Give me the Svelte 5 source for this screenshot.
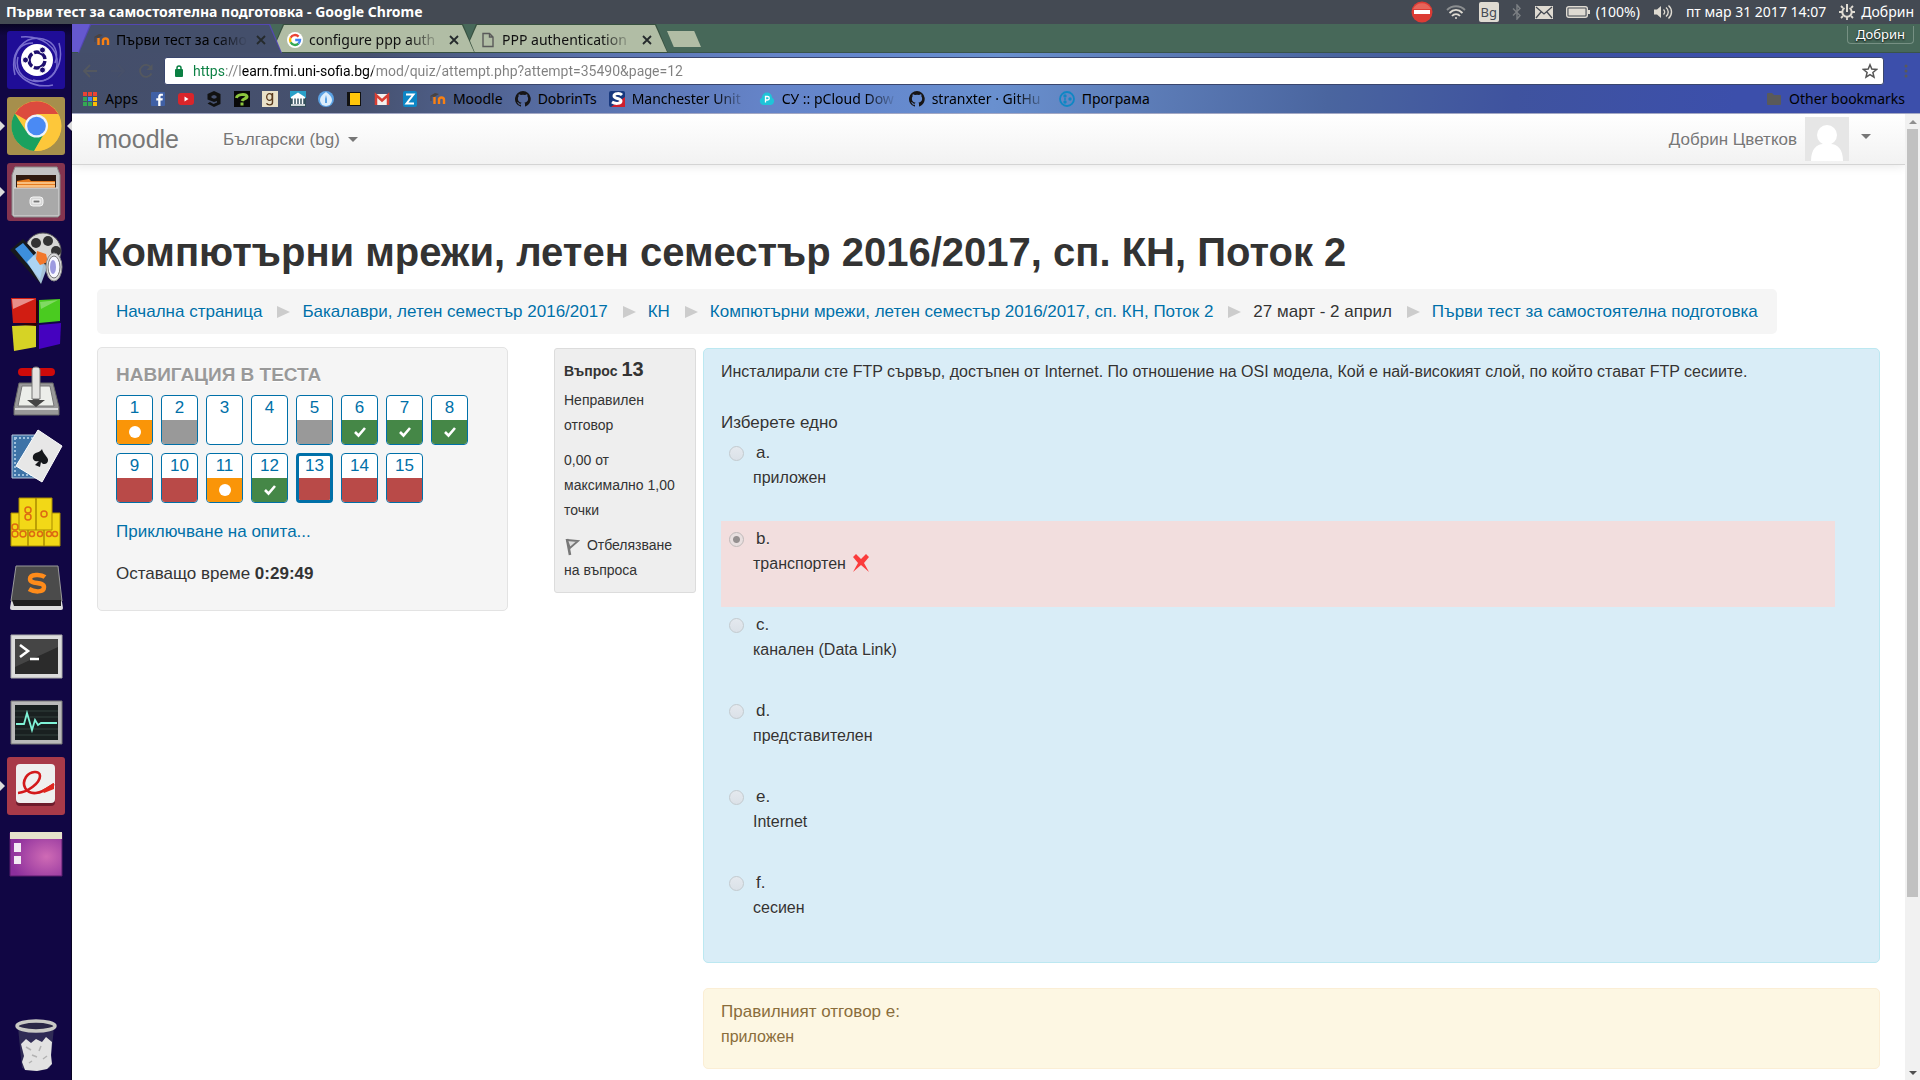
<script>
  const indicators = { date: 'пт мар 31 2017 14:07', user: 'Добрин' };

  const tabs = [
    { title: 'Първи тест за само', icon: 'moodle', active: true },
    { title: 'configure ppp auth', icon: 'google', active: false },
    { title: 'PPP authentication', icon: 'page', active: false }
  ];

  const bookmarks = [
    { icon: 'apps', label: 'Apps' },
    { icon: 'facebook', name: 'Facebook' },
    { icon: 'youtube', name: 'YouTube' },
    { icon: 'nine', name: '9GAG' },
    { icon: 'question', name: 'Question' },
    { icon: 'goodreads', name: 'Goodreads' },
    { icon: 'museum', name: 'Museum' },
    { icon: 'drop', name: 'Drop' },
    { icon: 'yellow', name: 'National Geographic' },
    { icon: 'gmail', name: 'Gmail' },
    { icon: 'zed', name: 'Z' },
    { icon: 'moodle', label: 'Moodle' },
    { icon: 'github', label: 'DobrinTs' },
    { icon: 'sport', label: 'Manchester Unit', fade: true },
    { icon: 'cloud', label: 'СУ :: pCloud Dow', fade: true },
    { icon: 'github', label: 'stranxter · GitHu', fade: true },
    { icon: 'program', label: 'Програма' }
  ];

  const launchers = [
    { icon: 'dash', name: 'Dash', tile: 'blue' },
    { icon: 'chrome', name: 'Google Chrome', tile: 'gold', running: true, focused: true },
    { icon: 'files', name: 'Files', tile: 'wine', running: true },
    { icon: 'movie', name: 'Movie player' },
    { icon: 'cubes', name: 'Cubes' },
    { icon: 'lever', name: 'Transmission' },
    { icon: 'cards', name: 'Solitaire' },
    { icon: 'mahjong', name: 'Mahjongg' },
    { icon: 'sublime', name: 'Sublime Text' },
    { icon: 'terminal', name: 'Terminal' },
    { icon: 'monitor', name: 'System Monitor' },
    { icon: 'document', name: 'Document Viewer', tile: 'red', running: true },
    { icon: 'desktop', name: 'Show Desktop' }
  ];

  const crumbs = [
    { text: 'Начална страница', link: true },
    { text: 'Бакалаври, летен семестър 2016/2017', link: true },
    { text: 'КН', link: true },
    { text: 'Компютърни мрежи, летен семестър 2016/2017, сп. КН, Поток 2', link: true },
    { text: '27 март - 2 април', link: false },
    { text: 'Първи тест за самостоятелна подготовка', link: true }
  ];

  const states = ['partial', 'saved', 'empty', 'empty', 'saved', 'right', 'right', 'right',
    'wrong', 'wrong', 'partial', 'right', 'wrong', 'wrong', 'wrong'];
  const current = 13;

  const answers = [
    { letter: 'a.', text: 'приложен' },
    { letter: 'b.', text: 'транспортен', chosen: true },
    { letter: 'c.', text: 'канален (Data Link)' },
    { letter: 'd.', text: 'представителен' },
    { letter: 'e.', text: 'Internet' },
    { letter: 'f.', text: 'сесиен' }
  ];
</script>

{#snippet favicon(kind)}
  <svg class="favicon" viewBox="0 0 16 16" width="16" height="16" aria-hidden="true">
    {#if kind === 'moodle'}
      <path d="M4.500 6v7M9 13V8.500a2 2 0 0 0-.5-1.500M9 13V9a2.300 2.300 0 0 1 5 0v4" fill="none" stroke="#f98012" stroke-width="2.400" />
      <path d="M0 5l5-3 4 1-5 3z" fill="#4a4340" />
      <path d="M1 5v5" stroke="#4a4340" stroke-width="1" />
    {:else if kind === 'google'}
      <circle cx="8" cy="8" r="8" fill="#fff" />
      <g fill="none" stroke-width="2.400">
        <path d="M11.600 4.600A5 5 0 0 0 3.600 5.700" stroke="#ea4335" />
        <path d="M3.600 5.700a5 5 0 0 0 0 4.600" stroke="#fbbc05" />
        <path d="M3.600 10.300a5 5 0 0 0 7.800 1.300" stroke="#34a853" />
        <path d="M11.400 11.600A5 5 0 0 0 13 8H8.200" stroke="#4285f4" />
      </g>
    {:else if kind === 'page'}
      <path d="M3 1.500h6.500L13 5v9.500H3z M9.500 1.500V5H13" fill="none" stroke="#5a5a5a" stroke-width="1.400" />
    {:else if kind === 'apps'}
      <g>
        <path d="M1 1h4v4H1zM6 1h4v4H6zM11 1h4v4h-4z" fill="#ea4335" />
        <path d="M1 6h4v4H1z" fill="#34a853" /><path d="M6 6h4v4H6z" fill="#4285f4" />
        <path d="M11 6h4v4h-4z" fill="#fbbc05" />
        <path d="M1 11h4v4H1zM6 11h4v4H6z" fill="#34a853" /><path d="M11 11h4v4h-4z" fill="#fbbc05" />
        <path d="M5.500 1v14M10.500 1v14M1 5.500h14M1 10.500h14" stroke="#434e6b" />
      </g>
    {:else if kind === 'facebook'}
      <rect x="1" y="1" width="14" height="14" rx="1" fill="#4060a5" />
      <path d="M10.500 15V9.500h2l.3-2.200h-2.300V6c0-.8.300-1.200 1.200-1.200h1.200V2.800C11 2.500 8.200 2.600 8.200 5.500v1.800H6.300v2.200h1.900V15z" fill="#fff" />
    {:else if kind === 'youtube'}
      <rect y="2" width="16" height="12" rx="3" fill="#d9252a" /><path d="M6.500 5.500v5l4-2.500z" fill="#fff" />
    {:else if kind === 'nine'}
      <path d="M8 0L1.500 3v5.500L8 11l3-1v1.500L7.500 13 4 11l-2.500 1.500L8 16l6.500-3V3zM8 4l2.500 1v2L8 7.800 5.500 6.700V5z" fill="#111" fill-rule="evenodd" />
    {:else if kind === 'question'}
      <rect width="16" height="16" fill="#080808" />
      <path d="M2.500 7C3 3 12 2.500 13 5.500c.5 2-4 2-5 4.500" fill="none" stroke="#8cc63e" stroke-width="3" />
      <rect x="6.500" y="11.500" width="3" height="3" fill="#8cc63e" />
    {:else if kind === 'goodreads'}
      <rect width="16" height="16" fill="#e9e1c9" />
      <ellipse cx="7.500" cy="6" rx="2.800" ry="3.400" fill="none" stroke="#5a3a1c" stroke-width="1.300" />
      <path d="M10.500 2v9.500c0 3-5 3-6 .8" fill="none" stroke="#5a3a1c" stroke-width="1.400" />
    {:else if kind === 'museum'}
      <rect width="16" height="16" fill="#35505c" /><path d="M0 0h16v7H0z" fill="#2aa0c8" /><path d="M1 6L8 1.500 15 6v1.500H1z" fill="#fff" />
      <path d="M3.500 7v6M6.500 7v6M9.500 7v6M12.500 7v6M1 14h14" stroke="#fff" stroke-width="1.500" />
    {:else if kind === 'drop'}
      <circle cx="8" cy="8" r="8" fill="#5ba2e4" /><path d="M8 1c4 3 6 5 6 8a6 6 0 0 1-12 0c0-3 2-5 6-8z" fill="#dceefc" />
      <path d="M8 4q1.500 4 1 8H7Q6.500 8 8 4z" fill="#5ba2e4" />
    {:else if kind === 'yellow'}
      <path d="M1 1h14v14H1z" fill="#111" /><path d="M4 2h10v12H4z" fill="#ffc60a" />
    {:else if kind === 'gmail'}
      <path d="M1 3h14v11H1z" fill="#f3f1ee" /><path d="M2 14V4l6 5.500L14 4v10" fill="none" stroke="#d93f34" stroke-width="2.500" />
    {:else if kind === 'zed'}
      <rect x="1" width="14" height="16" rx="2" fill="#0c86c6" /><path d="M4 3.500h7.500L4.500 12.500H12" fill="none" stroke="#fff" stroke-width="2" />
    {:else if kind === 'github'}
      <path d="M8 0a8 8 0 0 0-2.500 15.600c.4.100.5-.2.500-.4v-1.500c-2.200.5-2.700-1-2.700-1-.4-.9-.9-1.200-.9-1.200-.7-.5.100-.5.100-.5.800.1 1.200.8 1.200.8.700 1.300 1.900.9 2.300.7.100-.5.300-.9.500-1.100-1.800-.2-3.600-.9-3.600-4 0-.9.300-1.600.8-2.100-.1-.2-.4-1 .1-2.100 0 0 .7-.2 2.200.8a7.500 7.500 0 0 1 4 0c1.500-1 2.200-.8 2.200-.8.400 1.100.200 1.900.1 2.100.5.600.8 1.300.8 2.100 0 3.100-1.900 3.800-3.700 4 .3.300.6.800.6 1.500v2.200c0 .2.100.5.500.4A8 8 0 0 0 8 0z" fill="#171515" />
    {:else if kind === 'sport'}
      <rect width="16" height="16" rx="2" fill="#17387e" /><path d="M2 16L16 6v10z" fill="#d01f2c" />
      <path d="M13 4C11 2 5 2 5 5s7 2 7 5-6 3-9 1" fill="none" stroke="#fff" stroke-width="3" />
    {:else if kind === 'cloud'}
      <path d="M4 14a4 4 0 0 1-1-7.500 5 5 0 0 1 10 0A4 4 0 0 1 12 14z" fill="#1fc4d8" />
      <path d="M6.500 11.500V5.500h2a1.700 1.700 0 0 1 0 3.500h-2" fill="none" stroke="#fff" stroke-width="1.300" />
    {:else if kind === 'program'}
      <circle cx="8" cy="8" r="7" fill="none" stroke="#0f87c4" stroke-width="1.800" />
      <g fill="#0f87c4"><circle cx="6" cy="5" r="1.700" /><circle cx="11" cy="8" r="1.700" /><circle cx="6" cy="11" r="1.700" /><circle cx="6" cy="8" r="1" /></g>
    {/if}
  </svg>
{/snippet}

{#snippet appIcon(kind)}
  <svg viewBox="0 0 58 58" width="58" height="58" aria-hidden="true">
    {#if kind === 'dash'}
      <g fill="none" stroke="#8f86dc" stroke-width="1.500" opacity=".8">
        <path d="M8 44C2 20 18 4 36 8c12 3 16 14 12 24" /><path d="M14 6c20-2 38 10 36 28-2 14-14 18-24 15" />
        <path d="M52 12c6 22-8 42-26 38C14 47 8 38 11 26" /><path d="M46 54C26 58 6 46 8 28c2-12 10-16 18-16" />
      </g>
      <circle cx="30" cy="29" r="16" fill="#fff" />
      <circle cx="30" cy="29" r="8" fill="none" stroke="#1d0f6e" stroke-width="3.400" stroke-dasharray="14.700 2" stroke-dashoffset="-1" />
      <g fill="#1d0f6e" stroke="#fff" stroke-width="1"><circle cx="18.500" cy="29" r="3" /><circle cx="35.500" cy="19" r="3" /><circle cx="35.500" cy="39" r="3" /></g>
    {:else if kind === 'chrome'}
      <circle cx="29.500" cy="29" r="25" fill="#fdc73a" />
      <path d="M29.500 29L7.800 16.500A25 25 0 0 1 51.200 17H29.500z" fill="#dc4b3e" />
      <path d="M7.800 16.500A25 25 0 0 0 27 53.900L38 35 19 34z" fill="#1aa15f" />
      <path d="M29.500 18h22a25 25 0 0 1-24 36l11-19z" fill="#fdc73a" />
      <circle cx="29.500" cy="29" r="11.500" fill="#eef3fb" /><circle cx="29.500" cy="29" r="9.300" fill="#4a8af4" />
    {:else if kind === 'files'}
      <path d="M8 4h42l3 8v40l-2 2H7l-2-2V12z" fill="#c3c3c3" stroke="#8a8a8a" /><path d="M9 12h40v14H9z" fill="#2f1a10" />
      <path d="M10 18l12-2 2 2h24v7H10z" fill="#e57b1f" /><path d="M10 20h38M10 23h38" stroke="#ffd6a0" stroke-width="1.500" />
      <path d="M7 25h44v27H7z" fill="#a9a9a9" /><path d="M7 25h44" stroke="#e0e0e0" />
      <rect x="23" y="34" width="13" height="9" rx="3" fill="#d7d7d7" stroke="#f4f4f4" /><rect x="26" y="37" width="7" height="3" fill="#777" stroke="#fff" />
    {:else if kind === 'movie'}
      <circle cx="36" cy="22" r="18" fill="#d7d7d5" stroke="#555" />
      <g fill="#333"><circle cx="29" cy="14" r="5" /><circle cx="41" cy="12" r="5" /><circle cx="49" cy="22" r="5" /><circle cx="25" cy="26" r="4" /></g>
      <path d="M3 21l13-11 23 24-5 21-7-7z" fill="#17191d" /><path d="M8 20l8-6 20 23-3 13z" fill="#3d8fdd" /><path d="M20 33l10-10 10 16-6 16z" fill="#bfe0f7" opacity=".85" />
      <path d="M30 22l9 3 2 8-8 3-4-6z" fill="#f2772a" />
      <ellipse cx="47" cy="38" rx="8" ry="14" fill="#dcdcdc" stroke="#888" /><ellipse cx="47" cy="38" rx="6" ry="11" fill="#f7f7ff" stroke="#777" /><ellipse cx="46" cy="38" rx="3" ry="7" fill="#9d9ae0" />
    {:else if kind === 'cubes'}
      <path d="M4 3h25v25H6z" fill="#d11d12" /><path d="M32 5l21-1v22l-21 2z" fill="#4acb20" /><path d="M5 31l24-1v22L7 56z" fill="#d6d325" /><path d="M32 30l22-2-1 21-21 5z" fill="#4502bf" />
      <path d="M5 4h23L6 14z" fill="#fff" opacity=".5" /><path d="M33 7l18-2-17 9z" fill="#fff" opacity=".3" /><path d="M29 5v23l2-2V6zM7 29l24-1-2 3z" fill="#300" />
    {:else if kind === 'lever'}
      <path d="M12 22h34l6 24v8H7v-8z" fill="#999" stroke="#666" /><path d="M15 25h28l4 20H11z" fill="#eceeea" stroke="#777" />
      <path d="M20 39h6v-4h6v4h6l-9 7z" fill="#444" /><rect x="11" y="7" width="37" height="8" rx="4" fill="#cf0a0a" />
      <path d="M25 9c0-4 8-4 8 0v29h-8z" fill="#e4e4e2" stroke="#777" /><path d="M8 48h43" stroke="#ddd" stroke-width="2" />
    {:else if kind === 'cards'}
      <path d="M5 8h26v43H5z" fill="#3e73a7" stroke="#b7c8da" /><path d="M8 11h20v37H8z" fill="none" stroke="#9fc0dd" stroke-dasharray="2 2" stroke-width="2" />
      <path d="M31 3l24 16-20 36L9 39z" fill="#e7e7e7" stroke="#fff" /><path d="M35 22c1 6 9 9 5 14-2 2-5 1-6-1l-1 5-5-2 4-4c-4 1-7-1-6-5 1-4 7-3 9-7z" fill="#15171b" />
    {:else if kind === 'mahjong'}
      <g fill="#f2d817" stroke="#a98b00"><path d="M4 20h17v33H4zM21 20h16v33H21zM37 20h16v33H37z" /><path d="M12 5h17v32H12zM29 5h16v32H29z" /></g>
      <g fill="none" stroke="#dc6a12" stroke-width="1.500"><circle cx="21" cy="17" r="3" /><circle cx="21" cy="24" r="3" /><circle cx="37" cy="21" r="3" /><circle cx="8" cy="34" r="3" /><circle cx="8" cy="41" r="3" /><circle cx="16" cy="41" r="3" /><circle cx="25" cy="41" r="2.500" /><circle cx="33" cy="41" r="2.500" /><circle cx="42" cy="41" r="2.500" /><circle cx="48" cy="41" r="2.500" /></g>
    {:else if kind === 'sublime'}
      <path d="M5 37l-2 12q0 2 2 2h49q2 0 2-2l-2-12z" fill="#ddd" /><path d="M9 7h42l4 35H4z" fill="#4b4b4b" stroke="#999" /><path d="M5 41h49v6H7z" fill="#1e1e1e" />
      <path d="M38 18c-4-3-15-3-15 2 0 6 14 2 14 8s-10 5-15 2" fill="none" stroke="#ff8b1a" stroke-width="4.500" />
    {:else if kind === 'terminal'}
      <path d="M4 10h51v43H4z" fill="#dcdcdc" stroke="#aaa" /><path d="M8 14h43v35H8z" fill="#2b2b2b" /><path d="M8 14h43v8L8 42z" fill="#454545" />
      <path d="M13 20l8 6-8 6M23 34h9" fill="none" stroke="#fff" stroke-width="2.600" />
    {:else if kind === 'monitor'}
      <path d="M4 10h51v43H4z" fill="#b9b9b9" stroke="#777" /><path d="M8 14h43v35H8z" fill="#192020" /><path d="M8 20h43M8 26h43M8 38h43M8 44h43" stroke="#32403c" />
      <path d="M9 33h8l3-11 5 17 3-10 3 5 3-2h16" fill="none" stroke="#7ff3d7" stroke-width="1.800" />
    {:else if kind === 'document'}
      <rect x="9" y="9" width="39" height="40" rx="4" fill="#6d1c2c" /><rect x="9" y="7" width="39" height="39" rx="4" fill="#efefef" />
      <path d="M11 36c10-1 22-10 22-17 0-6-10-5-14 1-5 8 0 17 10 16 8-1 12-5 18-9" fill="none" stroke="#d3191b" stroke-width="2.600" /><path d="M35 33l12-7v6l-10 4z" fill="#e0271f" />
    {:else if kind === 'desktop'}
      <defs><radialGradient id="glow" cx=".7" cy=".55" r=".7"><stop stop-color="#cf6bb5" /><stop offset="1" stop-color="#8c2f9c" /></radialGradient></defs>
      <path d="M3 10h52v43H3z" fill="url(#glow)" stroke="#5b1c6d" /><path d="M3 9h52v7H3z" fill="#e6e3cb" />
      <path d="M7 20h7v9H7zM7 33h7v8H7z" fill="#f2eaf4" />
    {:else if kind === 'trash'}
      <path d="M11 11l4 41q14 6 28 0l4-41z" fill="#37345a" opacity=".8" />
      <path d="M14 28l5-5 5 4 5-4 6 3 4-5 6 5-1 13 1 9-5 5-10 2-12-1-3-8 2-6z" fill="#e2e2e2" /><path d="M19 31l5 3M25 39l5 2M34 30l-2 5M36 43l4-3M22 47l3-2" fill="none" stroke="#b2b2b2" stroke-width="1.500" />
      <ellipse cx="29" cy="10" rx="19" ry="5" fill="#2a2746" stroke="#c9c9c5" stroke-width="3.500" />
    {/if}
  </svg>
{/snippet}

<div class="desktop">
  <header class="panel">
    <span class="window-title">Първи тест за самостоятелна подготовка - Google Chrome</span>
    <div class="tray">
      <svg viewBox="0 0 22 22" width="22" height="22" aria-hidden="true"><circle cx="11" cy="11" r="10.500" fill="#dc3b34" /><path d="M2 8a10 10 0 0 1 18 0z" fill="#ef8f80" opacity=".5" /><path d="M3 11h16" stroke="#fff" stroke-width="4" /></svg>
      <svg viewBox="0 0 20 16" width="20" height="16" aria-hidden="true" fill="none" stroke-width="1.800"><path d="M1 6c5-5 13-5 18 0" stroke="#8b8e90" /><path d="M3.500 9c4-4 9-4 13 0M6 12c2-2.500 6-2.500 8 0" stroke="#dfdbd2" /><circle cx="10" cy="14" r="1" fill="#dfdbd2" stroke="none" /></svg>
      <span class="layout">Bg</span>
      <svg viewBox="0 0 10 16" width="10" height="16" aria-hidden="true" fill="none" stroke="#7c8084" stroke-width="1.400"><path d="M1 4.500l7 7L5 15V1l3 3.500-7 7" /></svg>
      <svg viewBox="0 0 18 13" width="18" height="13" aria-hidden="true"><path d="M0 0h18v13H0z" fill="#dfdbd2" /><path d="M1 1l8 7 8-7M1 12l5-6M17 12l-5-6" fill="none" stroke="#454a52" stroke-width="1.300" /></svg>
      <span class="battery">
        <svg viewBox="0 0 24 12" width="24" height="12" aria-hidden="true"><rect x=".7" y=".7" width="20.600" height="10.600" rx="2" fill="none" stroke="#dfdbd2" stroke-width="1.400" /><path d="M2.500 2.500h17v7h-17zM22 4h2v4h-2z" fill="#dfdbd2" /></svg>
        (100%)
      </span>
      <svg viewBox="0 0 20 16" width="20" height="16" aria-hidden="true"><path d="M1 5.500h3L8 2v12l-4-3.500H1z" fill="#dfdbd2" /><path d="M10.500 5.500c1.500 1.500 1.500 3.500 0 5M13 3.500c3 2.500 3 6.500 0 9M15.500 1.500c4 3.500 4 9.500 0 13" fill="none" stroke="#dfdbd2" stroke-width="1.400" /></svg>
      <time>{indicators.date}</time>
      <span class="session">
        <svg viewBox="0 0 16 16" width="16" height="16" aria-hidden="true" fill="none" stroke="#dfdbd2"><path d="M5.500 4a4.700 4.700 0 1 0 5 0" stroke-width="2" /><path d="M8 0v8" stroke-width="2" /><path d="M2 2l2 2M14 2l-2 2M0 8h3M13 8h3M2 14l2-2M14 14l-2-2M8 13v3" stroke-width="1.800" /></svg>
        {indicators.user}
      </span>
    </div>
  </header>

  <div class="workspace">
    <nav class="launcher" aria-label="Launcher">
      {#each launchers as app}
        <button class="app {app.tile ?? ''}" class:running={app.running} class:focused={app.focused} aria-label={app.name}>
          {@render appIcon(app.icon)}
        </button>
      {/each}
      <button class="app trash" aria-label="Trash">{@render appIcon('trash')}</button>
    </nav>

    <section class="browser">
      <div class="tabstrip">
        {#each tabs as tab, i}
          <div class="tab" class:active={tab.active} style:z-index={3 - i}>
            {@render favicon(tab.icon)}
            <span class="tab-title">{tab.title}</span>
            <button class="tab-close" aria-label="Close tab">
              <svg viewBox="0 0 10 10" width="10" height="10" aria-hidden="true"><path d="M1 1l8 8M9 1L1 9" stroke="currentColor" stroke-width="1.800" /></svg>
            </button>
          </div>
        {/each}
        <button class="new-tab" aria-label="New tab"></button>
        <button class="profile">Добрин</button>
      </div>

      <div class="chrome-bars">
        <div class="toolbar">
          <button class="tool" aria-label="Back"><svg viewBox="0 0 16 16" width="16" height="16" aria-hidden="true"><path d="M15 8H2M8 2L2 8l6 6" fill="none" stroke="currentColor" stroke-width="1.800" /></svg></button>
          <button class="tool forward" aria-label="Forward"><svg viewBox="0 0 16 16" width="16" height="16" aria-hidden="true"><path d="M1 8h13M8 2l6 6-6 6" fill="none" stroke="currentColor" stroke-width="1.800" /></svg></button>
          <button class="tool" aria-label="Reload"><svg viewBox="0 0 16 16" width="16" height="16" aria-hidden="true"><path d="M13.500 10.500A6 6 0 1 1 13 4.500" fill="none" stroke="currentColor" stroke-width="1.800" /><path d="M14.500 1v6h-6z" fill="currentColor" /></svg></button>
          <div class="omnibox">
            <svg viewBox="0 0 10 14" width="10" height="14" aria-hidden="true"><rect y="5" x="1" width="8" height="8" rx="1" fill="#0b8043" /><path d="M3 6V4a2 2 0 0 1 4 0v2" fill="none" stroke="#0b8043" stroke-width="1.500" /></svg>
            <input class="url" aria-label="Address" value="https://learn.fmi.uni-sofia.bg/mod/quiz/attempt.php?attempt=35490&page=12" />
            <button class="star" aria-label="Bookmark this page"><svg viewBox="0 0 16 16" width="16" height="16" aria-hidden="true"><path d="M8 1.800l1.800 4.300 4.700.4-3.600 3 1.100 4.600L8 11.700l-4 2.400 1.100-4.600-3.600-3 4.700-.4z" fill="none" stroke="#555" stroke-width="1.500" /></svg></button>
          </div>
          <button class="menu" aria-label="Menu"><svg viewBox="0 0 4 14" width="4" height="14" aria-hidden="true" fill="#5a5a5a"><circle cx="2" cy="2" r="1.500" /><circle cx="2" cy="7" r="1.500" /><circle cx="2" cy="12" r="1.500" /></svg></button>
        </div>
        <nav class="bookmarks" aria-label="Bookmarks">
          {#each bookmarks as mark}
            <a class="bookmark" href="#bookmark" aria-label={mark.label ?? mark.name}>
              {@render favicon(mark.icon)}
              {#if mark.label}<span class:fade={mark.fade}>{mark.label}</span>{/if}
            </a>
          {/each}
          <a class="bookmark other" href="#bookmark">
            <svg viewBox="0 0 16 16" width="16" height="16" aria-hidden="true"><path d="M1 3q0-1 1-1h4l2 2h6q1 0 1 1v8q0 1-1 1H2q-1 0-1-1z" fill="#5a5a5a" /></svg>
            <span>Other bookmarks</span>
          </a>
        </nav>
      </div>

      <div class="viewport">
        <div class="page">
          <header class="navbar">
            <a class="brand" href="#home">moodle</a>
            <button class="nav-menu">Български (bg) <i class="caret"></i></button>
            <button class="nav-menu user">
              Добрин Цветков
              <svg class="avatar" viewBox="0 0 44 44" width="44" height="44" aria-hidden="true"><path d="M0 0h44v44H0z" fill="#e6e6e6" /><circle cx="22" cy="18" r="10" fill="#fff" /><path d="M6 44c0-12 6-17 12-17h8c6 0 12 5 12 17z" fill="#fff" /></svg>
              <i class="caret"></i>
            </button>
          </header>

          <main>
            <h1>Компютърни мрежи, летен семестър 2016/2017, сп. КН, Поток 2</h1>
            <nav class="breadcrumb" aria-label="Breadcrumb">
              {#each crumbs as crumb, i}
                {#if i > 0}<i class="arrow"></i>{/if}
                {#if crumb.link}<a href="#crumb">{crumb.text}</a>{:else}<span>{crumb.text}</span>{/if}
              {/each}
            </nav>

            <div class="columns">
              <aside class="quiz-nav">
                <h2>Навигация в теста</h2>
                <div class="numbers">
                  {#each states as state, i}
                    <a class="number {state}" class:current={i + 1 === current} href="#q{i + 1}">
                      <span class="digit">{i + 1}</span>
                      <span class="mark">
                        {#if state === 'right'}
                          <svg viewBox="0 0 14 12" width="14" height="12" aria-hidden="true"><path d="M2 6l3.500 3.500L12 2" fill="none" stroke="#fff" stroke-width="2.600" /></svg>
                        {:else if state === 'partial'}
                          <svg viewBox="0 0 12 12" width="12" height="12" aria-hidden="true"><circle cx="6" cy="6" r="6" fill="#fff" /></svg>
                        {/if}
                      </span>
                    </a>
                  {/each}
                </div>
                <a class="finish" href="#finish">Приключване на опита...</a>
                <p class="timer">Оставащо време <strong>0:29:49</strong></p>
              </aside>

              <section class="question">
                <div class="info">
                  <h3>Въпрос <span>13</span></h3>
                  <p>Неправилен отговор</p>
                  <p>0,00 от максимално 1,00 точки</p>
                  <p>
                    <svg class="flag" viewBox="0 0 16 20" width="16" height="20" aria-hidden="true"><path d="M3 2l3 16" stroke="#777" stroke-width="2.600" /><path d="M3 3l11 1-8 7z" fill="#ddd" stroke="#777" stroke-width="1.800" /></svg>
                    Отбелязване на въпроса
                  </p>
                </div>
                <div class="content">
                  <div class="formulation">
                    <p class="text">Инсталирали сте FTP сървър, достъпен от Internet. По отношение на OSI модела, Кой е най-високият слой, по който стават FTP сесиите.</p>
                    <fieldset>
                      <legend>Изберете едно</legend>
                      {#each answers as answer, i}
                        <div class="answer" class:incorrect={answer.chosen}>
                          <input type="radio" name="answer" id="answer{i}" checked={answer.chosen} disabled />
                          <label for="answer{i}">
                            <span class="letter">{answer.letter}</span>
                            <span>{answer.text}
                              {#if answer.chosen}
                                <svg class="cross" viewBox="0 0 16 18" width="16" height="18" aria-hidden="true"><path d="M0 3l3-3 5 5 5-5 3 3-5 6 5 9-8-7-8 7 5-9z" fill="#fb3b3b" /></svg>
                              {/if}
                            </span>
                          </label>
                        </div>
                      {/each}
                    </fieldset>
                  </div>
                  <div class="feedback">
                    <p>Правилният отговор е:</p>
                    <p class="text">приложен</p>
                  </div>
                </div>
              </section>
            </div>
          </main>
        </div>
        <div class="scrollbar" aria-hidden="true">
          <i class="up"></i>
          <div class="track"><div class="thumb"></div></div>
          <i class="down"></i>
        </div>
      </div>
    </section>
  </div>
</div>

<style>
  :global(body) { margin: 0; }
  :global(*) { box-sizing: border-box; }
  p, h1, h2, h3 { margin: 0; }
  a { color: #0070a8; text-decoration: none; }
  button { font: inherit; color: inherit; border: 0; padding: 0; background: none; }
  svg { display: block; flex: none; }

  .desktop {
    display: flex; flex-direction: column; height: 100vh; overflow: hidden;
    font: 14px/20px "Noto Sans", "Open Sans", sans-serif; color: #000;
  }
  .panel {
    display: flex; justify-content: space-between; align-items: center; flex: none;
    height: 24px; padding: 0 6px; background: #444a53; color: #fff; white-space: nowrap;
  }
  .window-title { font-weight: 700; }
  .tray { display: flex; align-items: center; gap: 13px; }
  .layout { width: 20px; border-radius: 2px; background: #dfdbd2; color: #444a53; font-size: 13px; text-align: center; }
  .battery, .session { display: flex; align-items: center; gap: 6px; }

  .workspace { display: flex; flex: 1; min-height: 0; }
  .launcher {
    display: flex; flex-direction: column; gap: 8px; flex: none; width: 72px; padding: 7px 7px 6px;
    background: linear-gradient(#080323, #110644 12px); border-right: 1px solid #080323;
  }
  .app { position: relative; width: 58px; height: 58px; border-radius: 3px; flex: none; }
  .blue { background: #1f0d97; }
  .gold { background: #a68f4c; }
  .wine { background: #84344f; }
  .red { background: #a83a49; }
  .trash { margin-top: auto; }
  .running::before, .focused::after {
    content: ""; position: absolute; top: 24px; border: 5px solid transparent;
  }
  .running::before { left: -7px; border-left-color: #dcdcdc; border-right: 0; }
  .focused::after { right: -7px; border-right-color: #dcdcdc; border-left: 0; }

  .browser { display: flex; flex-direction: column; flex: 1; min-width: 0; }
  .tabstrip {
    display: flex; align-items: stretch; flex: none; height: 29px; padding-left: 6px;
    background: linear-gradient(90deg, #6558cf 40px, #476859 40px);
    box-shadow: inset 0 -1px #39544a; isolation: isolate;
  }
  .tab {
    position: relative; display: flex; align-items: center; gap: 6px; width: 204px; margin-right: -11px; padding: 2px 14px 0 16px;
  }
  .tab::before, .tab::after {
    content: ""; position: absolute; inset: 0; z-index: -1; background: #37503f;
    clip-path: polygon(0 100%, 12px 0, calc(100% - 12px) 0, 100% 100%);
  }
  .tab::after { inset: 1px 1px 1px; background: #b1bda5; }
  .tab.active::before { background: #5347b3; }
  .tab.active::after { inset: 1px 1px 0; background: #444f6b; }
  .tab-title {
    flex: 1; overflow: hidden; white-space: nowrap;
    mask-image: linear-gradient(90deg, #000 calc(100% - 32px), transparent);
  }
  .tab:not(.active) { color: #111; }
  .tab-close { color: #252a2c; padding: 2px; }
  .new-tab {
    width: 34px; height: 16px; margin: 7px 0 0 10px; background: #b1bda5;
    clip-path: polygon(0 0, 80% 0, 100% 100%, 20% 100%);
  }
  .profile {
    height: 18px; margin: 2px 6px 0 auto; padding: 0 8px; color: #fff; font-size: 13px; line-height: 17px;
    border: 1px solid #769083; border-top: 0; border-radius: 0 0 4px 4px; text-shadow: 0 1px 2px #000;
  }
  .chrome-bars {
    flex: none; border-bottom: 1px solid #a3a8c4;
    background: linear-gradient(97deg, #444e6a 0%, #46516f 16%, #5a72ad 28%, #6584c9 38%, #6487cd 43%, #6990cf 50%, #5d7db8 58%, #4a659f 68%, #3f539f 78%, #3c4fab 90%);
  }
  .toolbar { display: flex; align-items: center; padding: 4px 8px 1px 10px; height: 32px; }
  .tool { width: 28px; color: #54585f; }
  .tool svg { display: block; }
  .forward { color: #475069; }
  .omnibox {
    display: flex; align-items: center; flex: 1; height: 28px; margin: 0 16px 0 -2px; padding: 0 5px 0 9px;
    background: #fff; border: 1px solid #3a466d; border-radius: 3px;
  }
  .url {
    flex: 1; border: 0; outline: 0; padding: 0; margin-left: 9px; font: 14px/20px Roboto, sans-serif; color: transparent;
    background: linear-gradient(90deg, #0b8043 33px, #808080 33px 48px, #000 48px 180px, #808080 180px);
    background-clip: text; -webkit-background-clip: text;
  }
  .menu { padding: 4px; }
  .bookmarks { display: flex; align-items: center; gap: 12px; height: 28px; padding: 0 15px 0 10px; }
  .bookmark { display: flex; align-items: center; gap: 7px; color: #000; white-space: nowrap; flex: none; }
  .fade {
    width: 115px; overflow: hidden;
    mask-image: linear-gradient(90deg, #000 calc(100% - 32px), transparent);
  }
  .other { margin-left: auto; }

  .viewport { display: flex; flex: 1; min-height: 0; background: #fff; }
  .page {
    flex: 1; min-width: 0; overflow: hidden; color: #333;
    font: 17px/25px "Liberation Sans", Arial, sans-serif;
  }
  .navbar {
    display: flex; align-items: center; height: 51px; padding: 0 34px 0 25px; color: #777;
    background: linear-gradient(#fff, #f2f2f2); border-bottom: 1px solid #d4d4d4; box-shadow: 0 1px 10px rgb(0 0 0 / 10%);
  }
  .brand { margin-right: 44px; color: #777; font-size: 25px; }
  .nav-menu { display: flex; align-items: center; gap: 8px; text-shadow: 0 1px #fff; }
  .user { margin-left: auto; }
  .user .caret { margin: 0 0 5px 4px; }
  .caret { border: 5px solid transparent; border-top-color: #777; border-bottom: 0; }

  main { padding: 62px 25px 0; }
  h1 { font-size: 40px; line-height: 50px; white-space: nowrap; }
  .breadcrumb {
    display: flex; align-items: center; width: fit-content; margin: 12px 0 13px; padding: 10px 19px;
    background: #f5f5f5; border-radius: 5px; white-space: nowrap; text-shadow: 0 1px #fff;
  }
  .arrow { margin: 0 12px 0 15px; border: 6px solid transparent; border-left: 13px solid #ccc; border-right: 0; }

  .columns { display: grid; grid-template-columns: 411px minmax(0, 1fr); gap: 46px; align-items: start; }
  .quiz-nav { padding: 14px 18px 24px; background: #f5f5f5; border: 1px solid #e3e3e3; border-radius: 5px; }
  h2 { color: #999; font-size: 19px; line-height: 25px; text-transform: uppercase; text-shadow: 0 1px #fff; }
  .numbers { display: flex; flex-wrap: wrap; gap: 8px; margin-top: 8px; }
  .number {
    display: grid; grid-template-rows: 24px 24px; width: 37px; height: 50px; overflow: hidden; text-align: center;
    background: #fff; border: 1px solid #0070a8; border-radius: 4px;
  }
  .digit { line-height: 23px; }
  .mark { display: grid; place-items: center; }
  .partial .mark { background: #fa9508; }
  .saved .mark { background: #999; }
  .right .mark { background: #458747; }
  .wrong .mark { background: #b94a48; }
  .current { border-width: 3px; grid-template-rows: 22px 22px; }
  .current .digit { line-height: 19px; }
  .finish { display: block; margin-top: 16px; }
  .timer { margin-top: 17px; }

  .question { display: grid; grid-template-columns: 142px minmax(0, 1fr); gap: 7px; align-items: start; padding-top: 1px; }
  .info {
    display: grid; gap: 10px; padding: 8px 9px 9px; font-size: 14px;
    background: #eee; border: 1px solid #dcdcdc; border-radius: 3px;
  }
  h3 { font-size: 14px; margin-bottom: -6px; }
  h3 span { font-size: 20px; }
  .flag { display: inline-block; margin-right: 3px; vertical-align: -7px; }
  .formulation {
    padding: 10px 17px 11px; background: #d9edf7; border: 1px solid #bce8f1; border-radius: 5px; text-shadow: 0 1px rgb(255 255 255 / 50%);
  }
  .text { font-size: 16px; }
  fieldset { margin: 0 27px 0 0; padding: 0; border: 0; min-width: 0; }
  legend { display: block; padding: 26px 0 0; }
  .answer { display: flex; align-items: flex-start; min-height: 86px; padding: 5px 8px; }
  .incorrect { background: #f2dede; }
  input[type="radio"] {
    appearance: none; flex: none; width: 15px; height: 15px; margin: 6px 9px 0 0;
    border: 1px solid #c3cace; border-radius: 50%; background: linear-gradient(#e4e9ee, #dbe1e8);
  }
  input[type="radio"]:checked { border-color: #bfb9b9; background: radial-gradient(#959090 3px, #e8dfdf 4px); }
  label { display: grid; font-size: 16px; }
  .letter { padding-left: 3px; font-size: 17px; }
  .cross { display: inline-block; margin-left: 3px; vertical-align: -3px; }
  .feedback {
    margin-top: 25px; padding: 10px 17px 19px; color: #8a6d3b; background: #fdf7e3; border: 1px solid #fbeed5; border-radius: 5px;
  }

  .scrollbar { display: flex; flex-direction: column; align-items: center; flex: none; width: 15px; background: #f1f1f1; }
  .up, .down { border: 4px solid transparent; margin: 6px 0 5px; }
  .up { border-bottom-color: #8f8f8f; border-top: 0; }
  .down { border-top-color: #505050; border-bottom: 0; }
  .track { flex: 1; width: 11px; }
  .thumb { height: 82%; background: #c1c1c1; }
</style>
